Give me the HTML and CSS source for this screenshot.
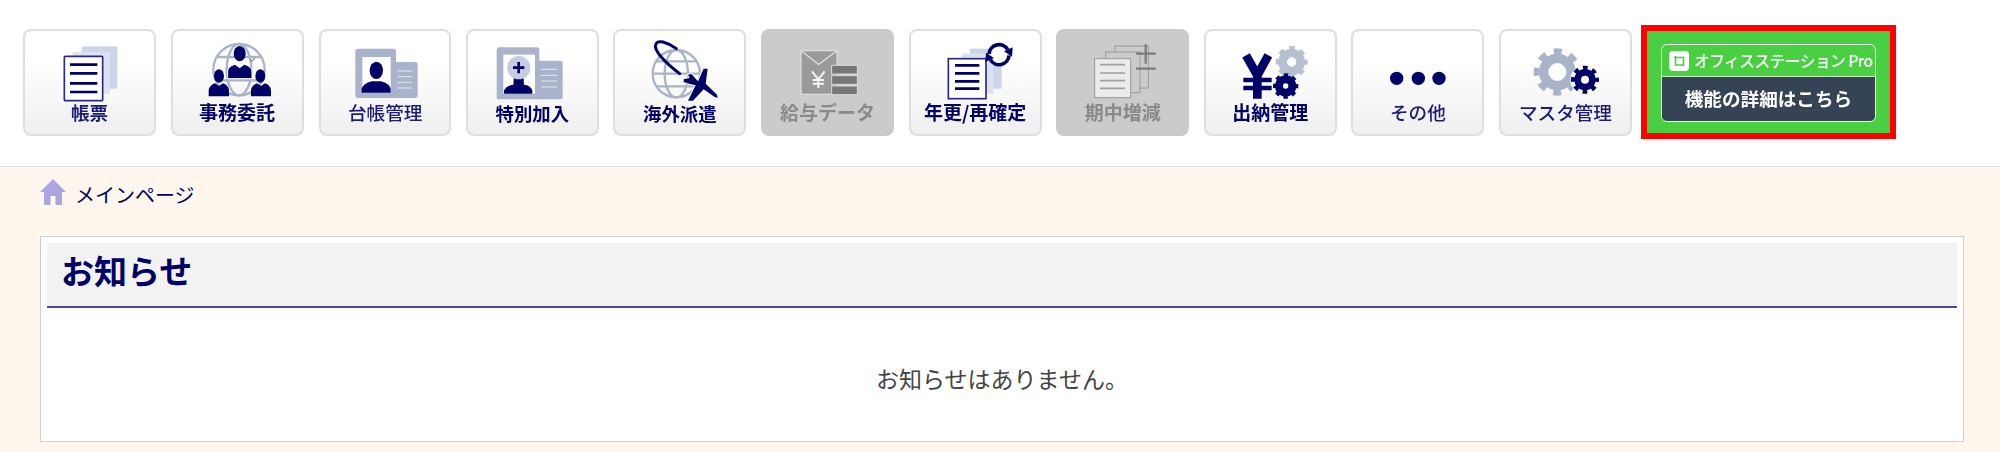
FILE: index.html
```html
<!DOCTYPE html>
<html lang="ja">
<head>
<meta charset="utf-8">
<title>メインページ</title>
<link rel="stylesheet" href="styles.css">
</head>
<body>
<header class="topbar">
  <nav class="menu">
    <a class="tile">
      <svg class="ico" viewBox="75 93 387 210">
        <rect class="sheet" x="245" y="133" width="107" height="127"/>
        <rect class="sheet2" x="218" y="150" width="112" height="125"/>
        <rect class="front" x="193" y="163" width="115" height="133" rx="3"/>
        <path class="rows" d="M210 188H292M210 214H292M210 244H292M210 270H292"/>
      </svg>
      <span class="cap bold soft">帳票</span>
    </a>
    <a class="tile">
      <svg class="ico" viewBox="519 93 387 210">
        <circle class="globe" cx="717" cy="203" r="77"/>
        <ellipse class="globe" cx="717" cy="203" rx="37" ry="77"/>
        <path class="globe" d="M650 165H785M645 235H790"/>
        <ellipse class="navy" cx="719" cy="155" rx="18" ry="23"/>
        <path class="halo" d="M683 230V207Q684 193 705 187L719 197L733 187Q754 193 756 207V230Z"/>
        <ellipse class="navy" cx="657" cy="222" rx="15" ry="20"/>
        <path class="navy" d="M626 283V263Q630 249 645 244L657 252L669 244Q684 249 687 263V283Z"/>
        <ellipse class="navy" cx="781" cy="222" rx="15" ry="20"/>
        <path class="navy" d="M753 283V263Q757 249 771 244L783 252L795 244Q810 249 813 263V283Z"/>
        <path class="tick" d="M750 173L756 178L765 167"/>
      </svg>
      <span class="cap bold">事務委託</span>
    </a>
    <a class="tile">
      <svg class="ico" viewBox="963 93 387 210">
        <rect class="slate" x="1066" y="140" width="122" height="148" rx="8"/>
        <rect class="slate" x="1170" y="180" width="83" height="108" rx="8"/>
        <rect class="paper" x="1087" y="165" width="85" height="107"/>
        <ellipse class="navy" cx="1129" cy="205" rx="20" ry="26"/>
        <path class="navy" d="M1085 272V260Q1090 245 1115 238H1143Q1168 245 1172 260V272Z"/>
        <path class="paperline" d="M1193 207H1236M1193 224H1236M1193 241H1236M1193 258H1236"/>
      </svg>
      <span class="cap soft medium">台帳管理</span>
    </a>
    <a class="tile">
      <svg class="ico" viewBox="-36 93 387 210">
        <rect class="slate" x="50" y="136" width="128" height="156" rx="8"/>
        <rect class="slate" x="160" y="176" width="88" height="116" rx="6"/>
        <rect class="paper" x="70" y="158" width="95" height="117"/>
        <path class="navy" d="M72 275V265Q80 250 100 248L102 220H130L132 248Q152 250 157 265V275Z"/>
        <circle class="mist" cx="116" cy="197" r="35"/>
        <path class="cross" d="M99 197H133M116 180V214"/>
        <path class="paperline" d="M183 202H232M183 220H232M183 237H232M183 255H232"/>
      </svg>
      <span class="cap bold lower">特別加入</span>
    </a>
    <a class="tile">
      <svg class="ico" viewBox="406 93 387 210">
        <circle class="globe" cx="590" cy="215" r="71"/>
        <ellipse class="globe" cx="590" cy="215" rx="35" ry="71"/>
        <path class="globe" d="M530 178H650M520 215H660M530 253H650"/>
        <path class="orbit" d="M600 215Q532 162 527 134Q528 115 550 120Q570 125 590 140"/>
        <path class="jet" d="M672 200H684L678 245L712 278L714 287L705 285L672 262L640 296H625L648 250L628 245L612 240V232L630 228L625 218L635 216L655 238Z"/>
      </svg>
      <span class="cap bold lower">海外派遣</span>
    </a>
    <a class="tile off">
      <svg class="ico" viewBox="849 93 387 210">
        <rect class="env" x="963" y="146" width="108" height="131"/>
        <path class="flap" d="M964 147L1016 187L1070 147"/>
        <path class="yen-w" d="M996 208L1015 232L1034 208M1015 232V258M998 234H1032M998 245H1032"/>
        <rect class="disk" x="1055" y="190" width="77" height="26"/>
        <rect class="disk" x="1055" y="221" width="77" height="26"/>
        <rect class="disk" x="1055" y="252" width="77" height="26"/>
      </svg>
      <span class="cap bold">給与データ</span>
    </a>
    <a class="tile">
      <svg class="ico" viewBox="-147 93 387 210">
        <rect class="sheet" x="30" y="140" width="95" height="120"/>
        <rect class="sheet2" x="5" y="155" width="95" height="120"/>
        <rect class="front" x="-35" y="170" width="113" height="120"/>
        <path class="rows" d="M-15 190H58M-15 214H58M-15 238H58M-15 260H58"/>
        <circle class="spin-bg" cx="117" cy="158" r="30"/>
        <path class="spin" d="M87 156A30 30 0 0 1 143 143M147 160A30 30 0 0 1 91 173"/>
        <path class="navy" d="M132 148L158 136L156 164ZM102 168L76 180L78 152Z"/>
      </svg>
      <span class="cap bold">年更/再確定</span>
    </a>
    <a class="tile off">
      <svg class="ico" viewBox="294 93 387 210">
        <rect class="ghost" x="465" y="132" width="100" height="126"/>
        <rect class="ghost" x="437" y="150" width="103" height="122"/>
        <rect class="ghost-front" x="404" y="170" width="108" height="117"/>
        <path class="ghost-rows" d="M420 188H495M420 213H495M420 236H495M420 259H495"/>
        <path class="ghost-sign" d="M528 155H587M557 127V185M528 200H587"/>
      </svg>
      <span class="cap bold">期中増減</span>
    </a>
    <a class="tile">
      <svg class="ico" viewBox="738 93 387 210">
        <circle class="tooth-s" cx="995" cy="180" r="42" pathLength="16"/>
        <circle class="ring-s" cx="995" cy="180" r="27"/>
        <path class="yen" d="M858 160L892 220L925 160M892 215V290"/>
        <path class="yen-bar" d="M850 234H935M850 258H935"/>
        <circle class="tooth-n" cx="977" cy="252" r="32" pathLength="16"/>
        <circle class="ring-n" cx="977" cy="252" r="20"/>
      </svg>
      <span class="cap bold">出納管理</span>
    </a>
    <a class="tile">
      <svg class="ico" viewBox="1179 93 387 210">
        <circle class="navy" cx="1310" cy="229" r="20"/>
        <circle class="navy" cx="1375" cy="229" r="20"/>
        <circle class="navy" cx="1437" cy="229" r="20"/>
      </svg>
      <span class="cap soft medium">その他</span>
    </a>
    <a class="tile">
      <svg class="ico" viewBox="63 93 387 210">
        <circle class="tooth-b" cx="232" cy="210" r="62" pathLength="16"/>
        <circle class="ring-b" cx="232" cy="210" r="41"/>
        <circle class="halo-c" cx="315" cy="233" r="44"/>
        <circle class="tooth-n" cx="315" cy="233" r="36" pathLength="16"/>
        <circle class="ring-m" cx="315" cy="233" r="22"/>
      </svg>
      <span class="cap soft medium">マスタ管理</span>
    </a>
  </nav>
  <a class="promo">
    <span class="promo-box">
      <span class="promo-top">
        <svg class="promo-logo" viewBox="0 0 20 20">
          <rect class="logo-bg" width="20" height="20" rx="4"/>
          <path class="logo-mark" d="M5 6.500H14.500V15"/>
          <path class="logo-mark" d="M6.500 5V14H15"/>
        </svg>
        <span class="promo-name">オフィスステーション Pro</span>
      </span>
      <span class="promo-cta">機能の詳細はこちら</span>
    </span>
  </a>
</header>
<main class="content">
  <div class="crumb">
    <svg class="home" viewBox="0 0 26 26"><path class="home-p" d="M13 0L26 13H22V26H15.500V17H10.500V26H4V13H0Z"/></svg>
    <span class="crumb-text">メインページ</span>
  </div>
  <section class="panel">
    <h2 class="panel-title">お知らせ</h2>
    <p class="panel-empty">お知らせはありません。</p>
  </section>
</main>
</body>
</html>
```
FILE: styles.css
```css
* { box-sizing: border-box; }
html, body { margin: 0; height: 100%; }
body {
  background: #fff7ee;
  font-family: "Noto Sans CJK JP", "Noto Sans", "Liberation Sans", sans-serif;
  color: #000066;
}
.topbar {
  display: flex;
  align-items: flex-start;
  height: 167px;
  padding: 25px 0 0 23px;
  background: #fff;
  border-bottom: 1px solid #e2e2e2;
}
.menu { display: flex; gap: 14.6px; margin-top: 4px; }
.tile {
  display: flex;
  flex-direction: column;
  width: 133px;
  height: 107px;
  padding-top: 2px;
  border: 2px solid #dedede;
  border-radius: 8px;
  background: linear-gradient(#ffffff 30%, #efefef);
}
.tile:nth-child(3) { width: 132px; margin-left: 1px; }
.tile.off { background: #cbcbcb; border-color: #cbcbcb; color: #8a8a8a; }
.ico { display: block; width: 129px; height: 70px; flex: none; }
.cap {
  display: block;
  height: 24px;
  margin-top: -3px;
  font-size: 19px;
  line-height: 24px;
  text-align: center;
  white-space: nowrap;
  filter: blur(.35px);
}
.cap.bold { font-weight: 700; }
.cap.medium { font-weight: 500; }
.cap.soft { color: #1c1c78; font-size: 18.6px; }
.cap.lower { padding-top: 1px; font-size: 18.4px; }

.navy { fill: #000066; }
.sheet { fill: #cdd6e8; }
.sheet2 { fill: #dbe2f0; }
.front { fill: #fff; stroke: #2a2a80; stroke-width: 5; }
.rows { fill: none; stroke: #000066; stroke-width: 8; }
.globe { fill: none; stroke: #a9b4c7; stroke-width: 7; }
.halo { fill: #000066; stroke: #fff; stroke-width: 3; }
.tick { fill: none; stroke: #5a6a8a; stroke-width: 3; }
.slate { fill: #a9b4cb; }
.paper { fill: #fff; }
.paperline { fill: none; stroke: #e6eaf2; stroke-width: 3; }
.mist { fill: #c6cde2; }
.cross { fill: none; stroke: #000066; stroke-width: 8; }
.orbit { fill: none; stroke: #000066; stroke-width: 9; stroke-linecap: round; }
.jet { fill: #000066; stroke: #fff; stroke-width: 6; paint-order: stroke; stroke-linejoin: round; }
.env { fill: #9a9a9a; stroke: #dcdcdc; stroke-width: 4; }
.flap { fill: none; stroke: #dcdcdc; stroke-width: 4; }
.yen-w { fill: none; stroke: #f4f4f4; stroke-width: 6; }
.disk { fill: #777; stroke: #dcdcdc; stroke-width: 3; }
.spin-bg { fill: #fff; }
.spin { fill: none; stroke: #000066; stroke-width: 11; }
.ghost { fill: #cbcbcb; stroke: #9a9a9a; stroke-width: 3; }
.ghost-front { fill: #ebebeb; stroke: #999; stroke-width: 3; }
.ghost-rows { fill: none; stroke: #a0a0a0; stroke-width: 5; }
.ghost-sign { fill: none; stroke: #7c7c7c; stroke-width: 7; }
.yen { fill: none; stroke: #000066; stroke-width: 26; }
.yen-bar { fill: none; stroke: #000066; stroke-width: 13; }
.tooth-s, .tooth-n, .tooth-b {
  fill: none;
  stroke-dasharray: 1 1;
  stroke-dashoffset: .5;
}
.tooth-s { stroke: #b7c0d0; stroke-width: 12; }
.ring-s { fill: #fff; stroke: #b7c0d0; stroke-width: 26; }
.tooth-n { stroke: #000066; stroke-width: 12; }
.ring-n { fill: #fff; stroke: #000066; stroke-width: 24; }
.tooth-b { stroke: #a9b4cb; stroke-width: 18; }
.ring-b { fill: #fff; stroke: #a9b4cb; stroke-width: 28; }
.halo-c { fill: #fafafa; }
.ring-m { fill: #fff; stroke: #000066; stroke-width: 20; }

.promo {
  display: block;
  flex: none;
  width: 255px;
  height: 114px;
  margin-left: 9px;
  padding: 13px 14px;
  border: 6px solid #ff0000;
  background: #4bcf42;
}
.promo-box {
  display: flex;
  flex-direction: column;
  height: 78px;
  border: 1.500px solid #e8f5e8;
  border-radius: 6px;
  overflow: hidden;
}
.promo-top {
  display: flex;
  align-items: center;
  gap: 5px;
  height: 32px;
  padding-left: 7px;
  border-bottom: 1px solid #c8ecc6;
  color: #fff;
}
.promo-logo { width: 20px; height: 20px; flex: none; }
.logo-bg { fill: #fff; }
.logo-mark { fill: none; stroke: #4bcf42; stroke-width: 1.600; }
.promo-name {
  font-size: 15.800px;
  font-weight: 500;
  letter-spacing: -.6px;
  line-height: 20px;
  white-space: nowrap;
  filter: blur(.25px);
}
.promo-cta {
  flex: 1;
  background: #364354;
  color: #fff;
  font-size: 18.6px;
  font-weight: 700;
  line-height: 42px;
  text-align: center;
  filter: blur(.25px);
}

.content { padding: 12px 36px 0 40px; }
.crumb { display: flex; align-items: flex-end; gap: 9px; height: 26px; }
.home { width: 26px; height: 26px; flex: none; }
.home-p { fill: #aba6e2; }
.crumb-text { font-size: 20px; line-height: 20px; color: #000066; }
.panel {
  margin-top: 31px;
  height: 206px;
  padding: 6px;
  background: #fff;
  border: 1px solid #cfcfcf;
}
.panel-title {
  margin: 0;
  height: 65px;
  padding-left: 14px;
  background: #f2f2f2;
  border-bottom: 2px solid #4a4a9c;
  font-size: 33px;
  font-weight: 700;
  line-height: 55px;
  color: #000066;
}
.panel-empty {
  margin: 0;
  padding-top: 53px;
  font-size: 23px;
  line-height: 34px;
  text-align: center;
  color: #444;
}
```
